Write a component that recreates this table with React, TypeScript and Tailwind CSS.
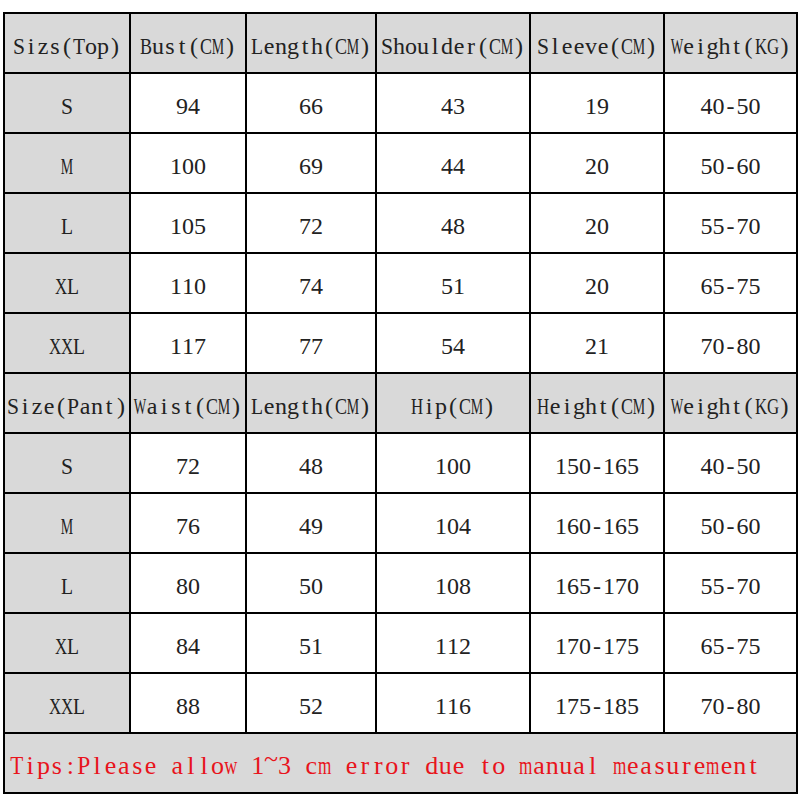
import React from 'react'

const topHead = ['Sizs(Top)', 'Bust(CM)', 'Length(CM)', 'Shoulder(CM)', 'Sleeve(CM)', 'Weight(KG)']
const topRows = [
  ['S', '94', '66', '43', '19', '40-50'],
  ['M', '100', '69', '44', '20', '50-60'],
  ['L', '105', '72', '48', '20', '55-70'],
  ['XL', '110', '74', '51', '20', '65-75'],
  ['XXL', '117', '77', '54', '21', '70-80'],
]
const pantHead = ['Size(Pant)', 'Waist(CM)', 'Length(CM)', 'Hip(CM)', 'Height(CM)', 'Weight(KG)']
const pantRows = [
  ['S', '72', '48', '100', '150-165', '40-50'],
  ['M', '76', '49', '104', '160-165', '50-60'],
  ['L', '80', '50', '108', '165-170', '55-70'],
  ['XL', '84', '51', '112', '170-175', '65-75'],
  ['XXL', '88', '52', '116', '175-185', '70-80'],
]

// half-width serif look: squeeze the wide Times glyphs into a fixed box
const squeeze: Record<string, string> = {
  A: 'scale-x-[0.7]',
  B: 'scale-x-[0.75]',
  C: 'scale-x-[0.75]',
  D: 'scale-x-[0.7]',
  E: 'scale-x-[0.82]',
  G: 'scale-x-[0.7]',
  H: 'scale-x-[0.7]',
  K: 'scale-x-[0.7]',
  L: 'scale-x-[0.82]',
  M: 'scale-x-[0.58]',
  P: 'scale-x-[0.9]',
  S: 'scale-x-[0.9]',
  T: 'scale-x-[0.82]',
  W: 'scale-x-[0.55]',
  X: 'scale-x-[0.7]',
  m: 'scale-x-[0.66]',
  w: 'scale-x-[0.7]',
  '~': '-translate-y-[7px]',
}

function Mono({ text, wide }: { text: string; wide?: boolean }) {
  return (
    <span className="inline-flex whitespace-nowrap">
      {text.split('').map((ch, i) => (
        <span
          key={i}
          className={`inline-flex justify-center ${wide ? 'w-[13.4px]' : 'w-[12px]'} ${squeeze[ch] ?? ''}`}
        >
          {ch === ' ' ? '\u00a0' : ch}
        </span>
      ))}
    </span>
  )
}

function Cell({ text, gray }: { text: string; gray?: boolean }) {
  return (
    <div className={`h-[58px] flex items-center justify-center pt-[5px] ${gray ? 'bg-[#d9d9d9]' : 'bg-white'}`}>
      <span className="text-[24px] leading-none text-[#222] [font-family:'Liberation_Serif',serif]">
        <Mono text={text} />
      </span>
    </div>
  )
}

function Block({ head, rows }: { head: string[]; rows: string[][] }) {
  return (
    <>
      {head.map((h, i) => (
        <Cell key={'h' + i} text={h} gray />
      ))}
      {rows.map((r, ri) =>
        r.map((c, ci) => <Cell key={ri + '-' + ci} text={c} gray={ci === 0} />)
      )}
    </>
  )
}

export default function App() {
  return (
    <div className="w-[800px] h-[800px] bg-white pt-[12px] pl-[3px]">
      <div className="inline-grid grid-cols-[124px_114px_128px_152px_132px_131px] gap-[2px] bg-black p-[2px]">
        <Block head={topHead} rows={topRows} />
        <Block head={pantHead} rows={pantRows} />
        <div className="col-span-6 h-[58px] bg-[#d9d9d9] flex items-center pl-[5px] pt-[6px]">
          <span className="text-[26px] leading-none text-[#e8141c] [font-family:'Liberation_Serif',serif]">
            <Mono text="Tips:Please allow 1~3 cm error due to manual measurement" wide />
          </span>
        </div>
      </div>
    </div>
  )
}
